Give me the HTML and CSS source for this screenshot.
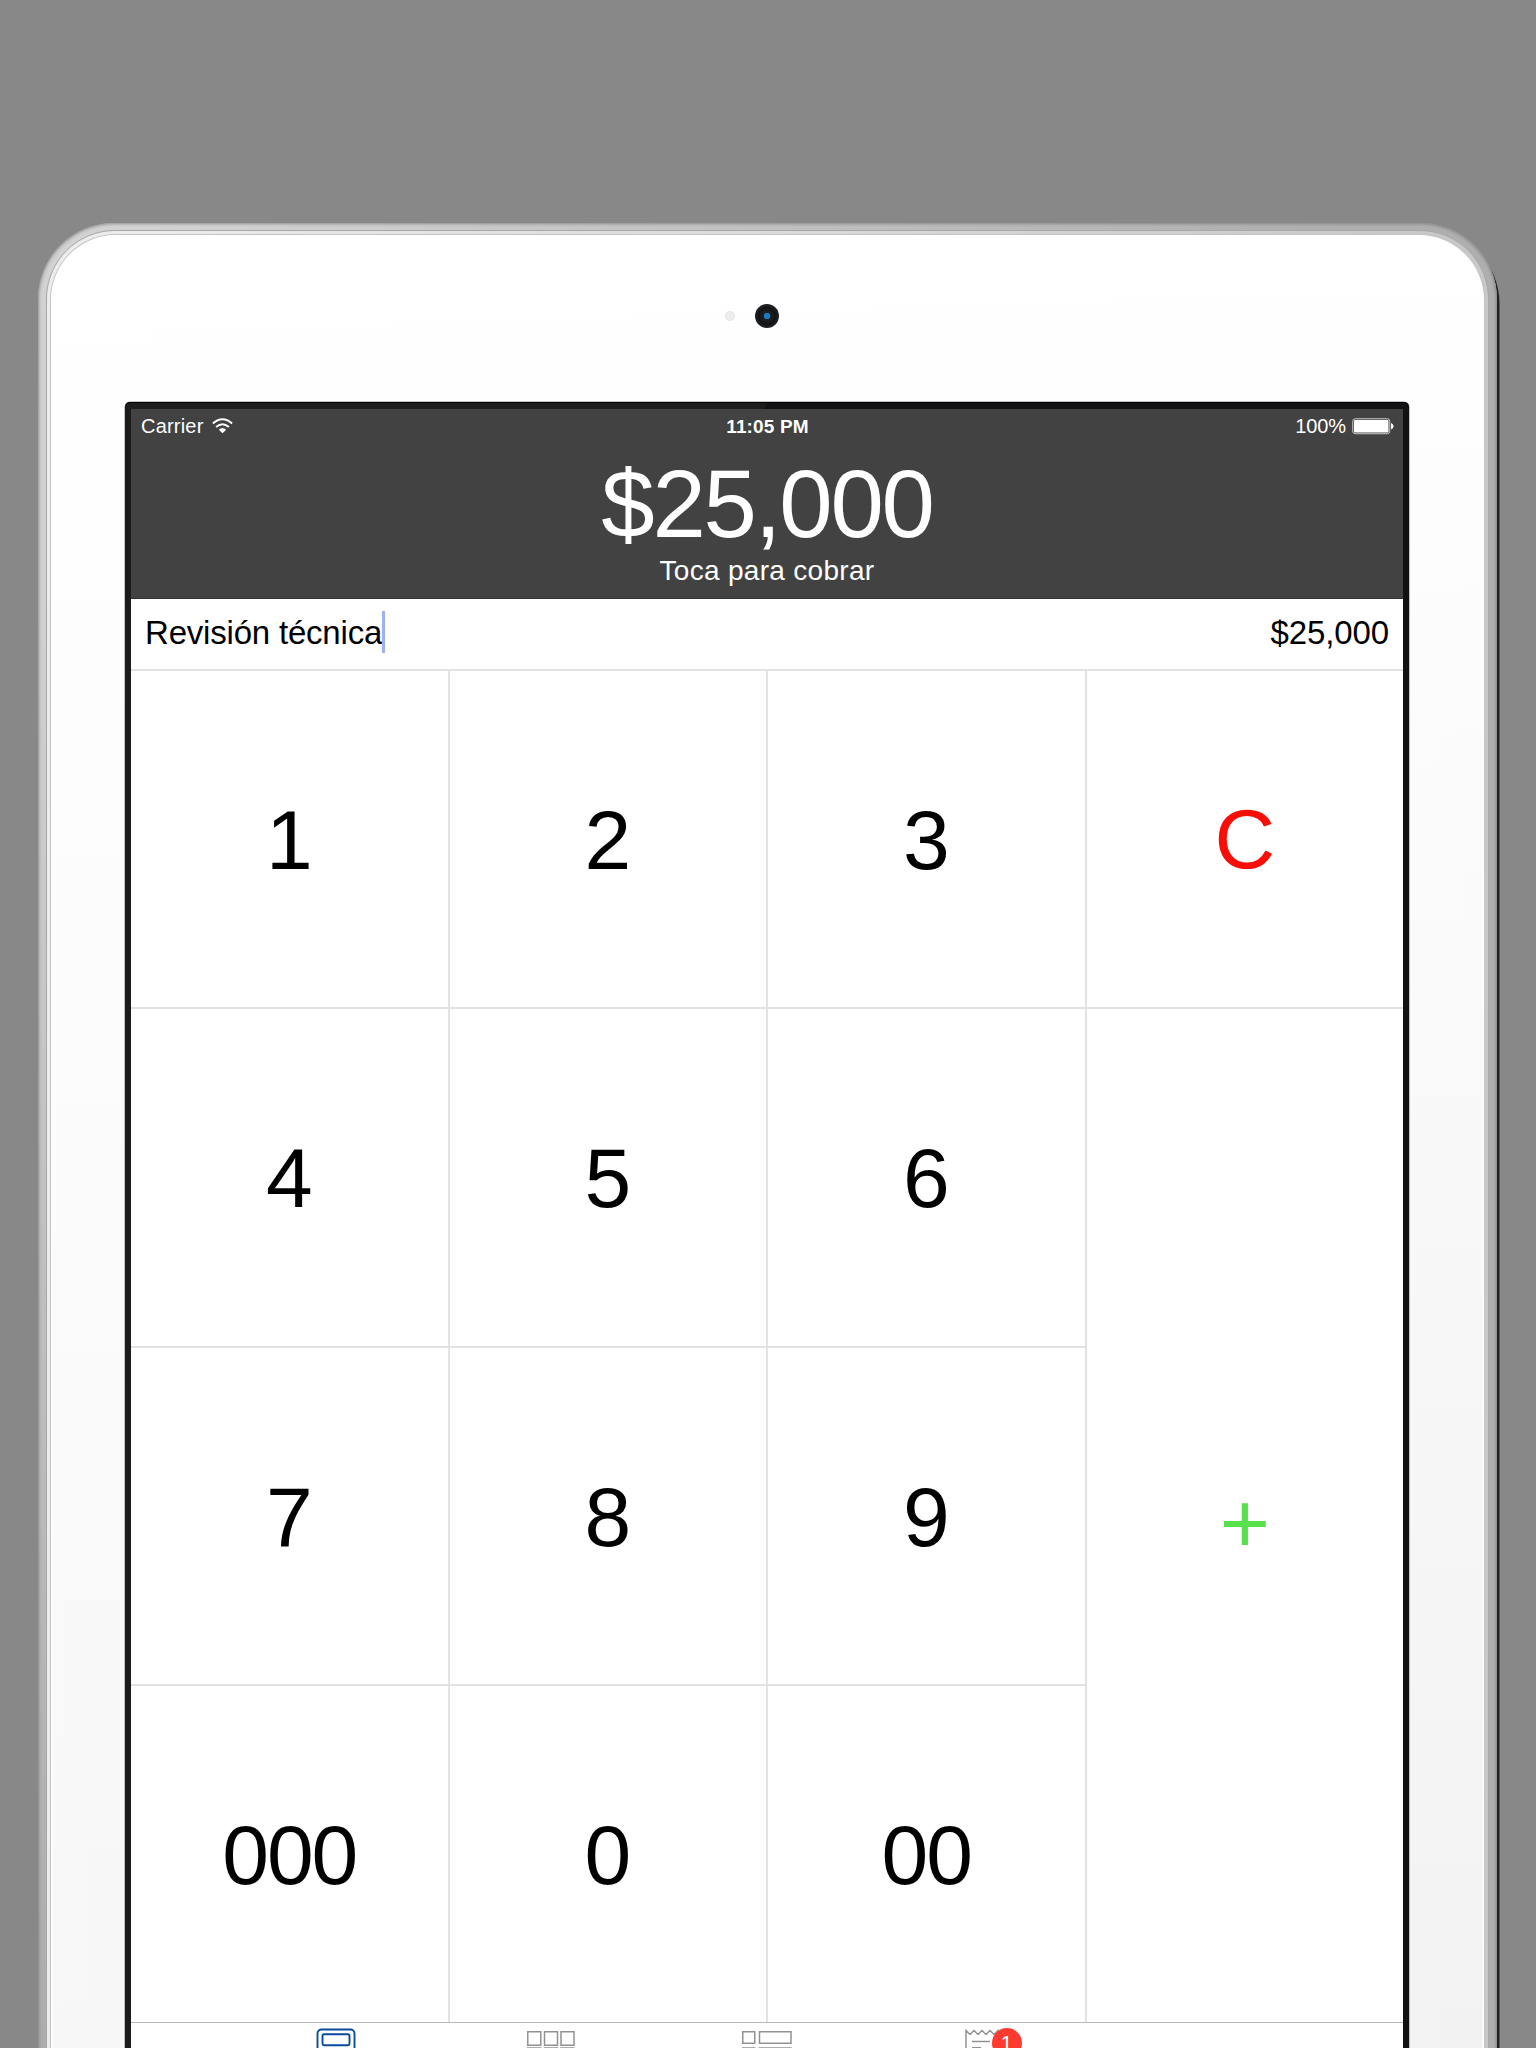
FILE: index.html
```html
<!DOCTYPE html>
<html lang="es">
<head>
<meta charset="utf-8">
<title>Cobrar</title>
<link rel="stylesheet" href="styles.css">
</head>
<body>
<div class="device-shadow">
<div class="device">
<div class="rim">
<div class="face">
  <div class="camera-row"><span class="sensor"></span><span class="camera"></span></div>
  <div class="frame">
  <main class="screen">
    <header class="header">
      <div class="status">
        <div class="status-left"><span class="carrier">Carrier</span>
          <svg class="wifi" width="21" height="16" viewBox="0 0 21 16" fill="none" stroke="#fff" stroke-width="2"><path d="M.9 5.4Q10.500-2.800 20.100 5.400M4.100 9Q10.500 3.400 16.900 9"/><path d="M6.800 11.700Q10.500 8.200 14.200 11.700L10.500 15.300Z" fill="#fff" stroke="none"/></svg>
        </div>
        <span class="time">11:05 PM</span>
        <div class="status-right"><span class="percent">100%</span>
          <svg class="battery" width="42" height="17" viewBox="0 0 42 17"><rect x=".75" y=".75" width="37" height="15" rx="2.500" fill="none" stroke="#ccc"/><rect x="2" y="2" width="34.500" height="12.500" rx="1" fill="#fff"/><path d="M39 5Q41.500 6 41.500 8.250T39 11.500Z" fill="#fff"/></svg>
        </div>
      </div>
      <div class="total">$25,000</div>
      <div class="hint">Toca para cobrar</div>
    </header>
    <div class="item"><span class="item-name">Revisión técnica</span><span class="caret"></span><span class="item-price">$25,000</span></div>
    <div class="keypad">
      <div class="key">1</div><div class="key">2</div><div class="key">3</div><div class="key clear">C</div>
      <div class="key">4</div><div class="key">5</div><div class="key">6</div><div class="key plus">+</div>
      <div class="key">7</div><div class="key">8</div><div class="key">9</div>
      <div class="key zeros">000</div><div class="key">0</div><div class="key zeros">00</div>
    </div>
    <nav class="tabs">
      <div class="tab"><svg width="40" height="40" viewBox="0 0 40 40" fill="none" stroke="#0b4a9e" stroke-width="1.900"><rect x="1.500" y="1.500" width="37" height="37" rx="4"/><rect x="6.500" y="6.300" width="27" height="11" rx="1.500"/></svg></div>
      <div class="tab"><svg width="50" height="40" viewBox="0 0 50 40" fill="none" stroke="#929292" stroke-width="1.500"><path d="M1.750 3.750h13v13.500h-13zM18.500 3.750h13v13.500h-13zM35 3.750h13v13.500h-13zM1.750 20h13v13h-13zM18.500 20h13v13h-13zM35 20h13v13h-13z"/></svg></div>
      <div class="tab"><svg width="52" height="40" viewBox="0 0 52 40" fill="none" stroke="#929292" stroke-width="1.500"><path d="M1.750 3.750h12v11.500h-12zM18.500 3.750h31.500v11.500H18.500zM1.750 20h12v11h-12zM18.500 20h31.500v11H18.500z"/></svg></div>
      <div class="tab receipt"><svg width="34" height="40" viewBox="0 0 34 40" fill="none" stroke="#929292" stroke-width="1.500"><path d="M1 39V2.500l4 4 4-4 4 4 4-4 4 4 4-4 4 4 4-4V39M7 13.500h18M7 19.700h9"/></svg><span class="badge">1</span></div>
    </nav>
  </main>
  </div>
</div>
</div>
</div>
</div>
</body>
</html>
```
FILE: styles.css
```css
* { box-sizing: border-box; }
html { overflow: hidden; }
body {
  margin: 0;
  height: 2048px;
  overflow: hidden;
  padding: 223px 0 0 38px;
  background: #888;
  font-family: "Liberation Sans", Arial, sans-serif;
}
.device-shadow {
  width: 1459px;
  height: 2000px;
  border-radius: 76px;
  box-shadow: 3px 5px 0 -0.5px #222;
}
/* aluminium edge */
.device {
  height: 2000px;
  padding: 7px 8px;
  border-radius: 76px;
  background:
    linear-gradient(90deg, transparent 10%, #afafaf 90%),
    linear-gradient(#d2d2d2, #d0d0d0 20%, #adadad 90%);
  box-shadow: inset 0 0 3px 1px rgba(110, 110, 110, .65);
}
.rim {
  height: 1990px;
  padding: 4px;
  border: 1px solid #a8a8a8;
  border-radius: 69px;
  background: linear-gradient(90deg, #ececec 5%, #c8c8c8 95%);
}
.face {
  height: 1980px;
  padding: 69px 74px 0;
  border-radius: 65px;
  background:
    linear-gradient(rgba(255, 255, 255, 1), rgba(255, 255, 255, 0)),
    linear-gradient(90deg, #f7f7f7, #f1f1f1);
  box-shadow: 0 0 0 1px #c4c4c4, inset 0 0 0 1.5px #fff;
}
.camera-row {
  position: relative;
  display: flex;
  justify-content: center;
  width: 1283px;
  height: 98px;
}
.camera {
  width: 24px;
  height: 24px;
  border-radius: 50%;
  background: radial-gradient(circle, #1b7bb8 0 3px, #15202a 3.500px, #17171a 7px, #111 8px, #222427 12px);
}
.sensor {
  position: absolute;
  left: 600px;
  top: 7px;
  width: 10px;
  height: 10px;
  border-radius: 50%;
  background: #ededed;
  border: 1px solid #e4e4e4;
}
.frame {
  width: 1284px;
  height: 1800px;
  padding: 7px 6px 0;
  border-radius: 5px;
  background: linear-gradient(100deg, #1c1c1c 40%, #121214 40.100%);
  box-shadow: inset 0 1px #000, 0 0 0 .5px #888;
}
.screen { background: #fff; }
.header {
  height: 190px;
  background: #424242;
  border-bottom: 1px solid #333;
  color: #fff;
  text-align: center;
}
.status {
  display: grid;
  grid-template-columns: 1fr auto 1fr;
  height: 34px;
  padding: 0 9px 0 10px;
  line-height: 35px;
  font-size: 20px;
}
.status-left, .status-right { display: flex; }
.status-left { gap: 8px; }
.status-right { gap: 6px; justify-content: flex-end; }
.carrier { letter-spacing: .2px; }
.wifi, .battery { margin-top: 9px; }
.time { font-weight: 700; font-size: 19px; letter-spacing: .15px; }
.percent { letter-spacing: -.1px; }
.total {
  height: 110px;
  padding-top: 6px;
  line-height: 110px;
  font-size: 96px;
  letter-spacing: -2.2px;
}
.hint {
  line-height: 36px;
  font-size: 28px;
  letter-spacing: .3px;
}
.item {
  display: flex;
  height: 70px;
  padding: 0 14px 0 14px;
  font-size: 33px;
  line-height: 68px;
}
.item-name { letter-spacing: -.2px; }
.caret { width: 3px; height: 42px; margin-top: 12px; background: #9fb0f8; }
.item-price { margin-left: auto; letter-spacing: -.1px; }
.keypad {
  display: grid;
  grid-template-columns: repeat(4, 1fr);
  grid-template-rows: repeat(4, 1fr);
  gap: 2px;
  height: 1353px;
  padding-top: 2px;
  background: #e2e2e2;
}
.key {
  display: grid;
  place-items: center;
  padding-top: 2px;
  background: #fff;
  color: #000;
  font-size: 84px;
  line-height: 1;
}
.zeros { letter-spacing: -2px; }
.clear { color: #f90d05; padding-top: 0; }
.plus {
  grid-row: 2 / span 3;
  grid-column: 4;
  padding-top: 14px;
  color: #57e14b;
  font-size: 86px;
}
.tabs {
  display: flex;
  height: 98px;
  padding: 5px 97px;
  border-top: 1px solid #b8b8b8;
}
.tab { display: flex; justify-content: center; width: 215.500px; }
.receipt { position: relative; }
.badge {
  position: absolute;
  left: 117px;
  top: 0;
  width: 30px;
  height: 30px;
  border-radius: 50%;
  background: #ff3b30;
  color: #fff;
  font-size: 21px;
  line-height: 30px;
  text-align: center;
}
```
